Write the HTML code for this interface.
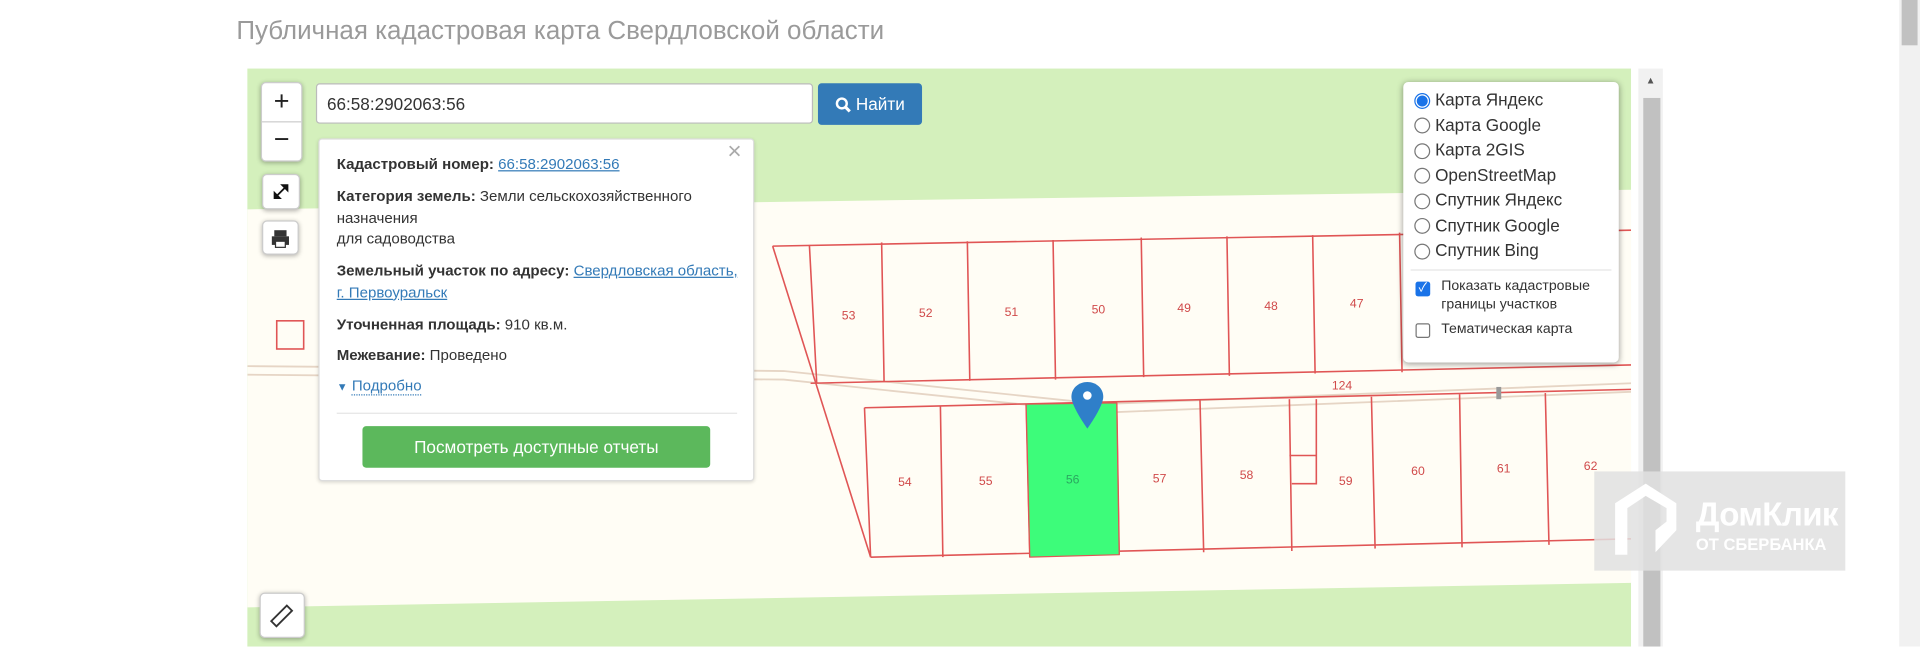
<!DOCTYPE html>
<html><head><meta charset="utf-8"><style>
html,body{margin:0;padding:0;background:#fff;overflow:hidden;width:1920px;height:646px}
#s{position:absolute;left:0;top:0;width:1568px;height:528px;transform:scale(1.22449);transform-origin:0 0;font-family:"Liberation Sans","Noto Sans CJK SC",sans-serif}
.a{position:absolute}
.btn{background:#fff;border:1px solid #ccc;border-radius:4px;box-shadow:0 1px 4px rgba(0,0,0,.3)}
.pp{font-size:12.3px;color:#333;line-height:17.5px}
.pp b{font-weight:bold}
.pp a{color:#337ab7;text-decoration:underline}
.ly{font-size:14px;color:#333}
.rd{position:absolute;left:9px;width:11px;height:11px;border:1px solid #777;border-radius:50%;background:#fff}
</style></head><body><div id="s">
<div class="a" style="left:193px;top:14px;font-size:21.2px;color:#9a9a9a">Публичная кадастровая карта Свердловской области</div>

<div class="a" style="left:202px;top:56px;width:1130px;height:472px;overflow:hidden;background:#d4f0bc">
<svg width="1130" height="472" viewBox="202 56 1130 472" style="position:absolute;left:0;top:0">
<polygon points="202,171 1332,155 1332,476 202,496" fill="#fffdf5"/>
<g fill="none" stroke="#e6d5c5" stroke-width="1.5">
<path d="M202,299 L640,303 L900,330 L1332,313"/><path d="M202,306 L640,310 L900,337 L1332,320"/>
</g>
<g fill="none" stroke="#e05555" stroke-width="1.3">
<path d="M631,201 L1332,188"/><path d="M662,313 L1332,298"/>
<path d="M631,201 L711,455"/>
<path d="M661,200 L667,313 M720,198 L722,312 M790,197 L792,311 M860,196 L862,310 M932,194 L934,308 M1002,193 L1004,307 M1072,192 L1074,305 M1143,190 L1145,304"/>
<path d="M706,333 L1332,318"/><path d="M711,455 L1332,440"/>
<path d="M706,333 L711,455 M768,332 L770,455 M838,330 L841,455 M912,329 L914,453 M980,327 L983,451 M1053,326 L1055,450 M1120,324 L1123,448 M1192,322 L1194,447 M1262,321 L1265,445"/>
<path d="M1053,372 L1075,372 L1075,395 L1055,395 M1075,372 L1075,326"/>
<rect x="226" y="262" width="22" height="23"/>
</g>
<polygon points="838,330 912,329 914,453 841,455" fill="#3dfc7a" stroke="#e05555" stroke-width="1"/>
<g fill="#d04a4a" font-size="10" font-family="Liberation Sans,sans-serif" text-anchor="middle">
<text x="693" y="261">53</text><text x="756" y="259">52</text><text x="826" y="258">51</text><text x="897" y="256">50</text><text x="967" y="255">49</text><text x="1038" y="253">48</text><text x="1108" y="251">47</text>
<text x="1096" y="318">124</text>
<text x="739" y="397">54</text><text x="805" y="396">55</text><text x="876" y="395" fill="#2aa860">56</text><text x="947" y="394">57</text><text x="1018" y="391">58</text><text x="1099" y="396">59</text><text x="1158" y="388">60</text><text x="1228" y="386">61</text><text x="1299" y="384">62</text>
</g>
<path d="M888,312 c-7,0 -13,5 -13,12 c0,8 13,26 13,26 c0,0 13,-18 13,-26 c0,-7 -6,-12 -13,-12z" fill="#2f7fc9"/>
<circle cx="888" cy="323" r="3.5" fill="#fff"/>
<rect x="1222" y="316" width="4" height="10" fill="#999"/>
</svg>
</div>

<!-- zoom -->
<div class="a btn" style="left:213px;top:67px;width:32px;height:63px;padding:0">
<div style="height:31px;border-bottom:1px solid #ccc;text-align:center;font-size:22px;line-height:30px;color:#222">+</div>
<div style="text-align:center;font-size:22px;line-height:28px;color:#222">−</div></div>
<div class="a btn" style="left:214px;top:142px;width:29px;height:27px">
<svg width="29" height="27" viewBox="0 0 29 27"><path d="M10,18 L19,9" stroke="#111" stroke-width="1.5"/><path d="M15,8 L20,8 L20,13Z M9,14 L9,19 L14,19Z" fill="#111" stroke="#111"/></svg></div>
<div class="a btn" style="left:214px;top:180px;width:28px;height:26px">
<svg width="28" height="26" viewBox="0 0 28 26"><rect x="9" y="7" width="10" height="5" fill="#333"/><rect x="7" y="12" width="14" height="7" fill="#333"/><rect x="10" y="16" width="8" height="5" fill="#fff" stroke="#333"/></svg></div>
<div class="a btn" style="left:212px;top:484px;width:35px;height:35px">
<svg width="35" height="35" viewBox="0 0 35 35"><rect x="14" y="9" width="6" height="18" transform="rotate(45 17 18)" fill="none" stroke="#333" stroke-width="1.5"/></svg></div>

<!-- search -->
<div class="a" style="left:258px;top:68px;width:406px;height:33px;border:1px solid #bbb;border-radius:3px;background:#fff;font-size:14px;line-height:33px;padding-left:8px;box-sizing:border-box;color:#333">66:58:2902063:56</div>
<div class="a" style="left:668px;top:68px;width:85px;height:34px;background:#337ab7;border-radius:3px;color:#fff;font-size:14px;line-height:34px;text-align:center">
<svg width="13" height="13" viewBox="0 0 13 13" style="vertical-align:-2px"><circle cx="5.5" cy="5.5" r="4" fill="none" stroke="#fff" stroke-width="2"/><path d="M8.5,8.5 L12,12" stroke="#fff" stroke-width="2.5"/></svg> Найти</div>

<!-- popup -->
<div class="a pp" style="left:260px;top:113px;width:356px;height:280px;background:#fff;border:1px solid #ddd;border-radius:3px;box-shadow:0 1px 3px rgba(0,0,0,.15);box-sizing:border-box">
<div class="a" style="left:333px;top:2px;font-size:20px;color:#aaa">×</div>
<div class="a" style="left:14px;top:12px"><b>Кадастровый номер:</b> <a>66:58:2902063:56</a></div>
<div class="a" style="left:14px;top:38px;width:330px"><b>Категория земель:</b> Земли сельскохозяйственного назначения<br>для садоводства</div>
<div class="a" style="left:14px;top:99px;width:335px"><b>Земельный участок по адресу:</b> <a>Свердловская область, г. Первоуральск</a></div>
<div class="a" style="left:14px;top:143px"><b>Уточненная площадь:</b> 910 кв.м.</div>
<div class="a" style="left:14px;top:168px"><b>Межевание:</b> Проведено</div>
<div class="a" style="left:14px;top:193px;color:#337ab7"><span style="font-size:9px">▼</span> <span style="border-bottom:1px dotted #337ab7">Подробно</span></div>
<div class="a" style="left:14px;top:223px;width:327px;border-top:1px solid #e5e5e5"></div>
<div class="a" style="left:35px;top:234px;width:284px;height:34px;background:#5cb85c;border-radius:3px;color:#fff;font-size:14px;line-height:34px;text-align:center">Посмотреть доступные отчеты</div>
</div>

<!-- layers -->
<div class="a ly" style="left:1146px;top:67px;width:176px;height:229px;background:#fff;border-radius:4px;box-shadow:0 1px 5px rgba(0,0,0,.4)">
<div class="rd" style="top:9px;border-color:#1a73e8;background:radial-gradient(#1a73e8 55%,#fff 60%)"></div><div class="a" style="left:26px;top:6px">Карта Яндекс</div>
<div class="rd" style="top:29px"></div><div class="a" style="left:26px;top:27px">Карта Google</div>
<div class="rd" style="top:50px"></div><div class="a" style="left:26px;top:47px">Карта 2GIS</div>
<div class="rd" style="top:70px"></div><div class="a" style="left:26px;top:68px">OpenStreetMap</div>
<div class="rd" style="top:91px"></div><div class="a" style="left:26px;top:88px">Спутник Яндекс</div>
<div class="rd" style="top:111px"></div><div class="a" style="left:26px;top:109px">Спутник Google</div>
<div class="rd" style="top:132px"></div><div class="a" style="left:26px;top:129px">Спутник Bing</div>
<div class="a" style="left:6px;top:153px;width:164px;border-top:1px solid #e5e5e5"></div>
<div class="a" style="left:10px;top:163px;width:12px;height:12px;background:#1a73e8;border-radius:2px;color:#fff;font-size:10px;line-height:12px;text-align:center">✓</div>
<div class="a" style="left:31px;top:160px;font-size:11.5px;line-height:15px">Показать кадастровые<br>границы участков</div>
<div class="a" style="left:10px;top:197px;width:10px;height:10px;border:1px solid #777;border-radius:2px"></div>
<div class="a" style="left:31px;top:196px;font-size:11.5px">Тематическая карта</div>
</div>

<!-- scrollbar -->
<div class="a" style="left:1338px;top:56px;width:20px;height:472px;background:#f1f1f1"></div>
<div class="a" style="left:1342px;top:80px;width:14px;height:448px;background:#c1c1c1"></div>
<div class="a" style="left:1344px;top:61px;font-size:8px;color:#555">▲</div>

<!-- watermark -->
<div class="a" style="left:1302px;top:385px;width:205px;height:81px;background:rgba(225,225,225,.85)">
<svg class="a" style="left:14px;top:8px" width="60" height="65" viewBox="0 0 60 65"><path d="M3,18 L28,2 L53,18 L53,40 L36,58 L36,40 L45,33 L45,22 L28,12 L13,22 L13,60 L3,60 Z" fill="#fff"/></svg>
<div class="a" style="left:83px;top:20px;color:#fff;font-size:27px;font-weight:bold;letter-spacing:-0.5px">ДомКлик</div>
<div class="a" style="left:83px;top:52px;color:#fff;font-size:13.5px;font-weight:bold">ОТ СБЕРБАНКА</div>
</div>

<div class="a" style="left:1551px;top:0;width:17px;height:528px;background:#f1f1f1"></div>
<div class="a" style="left:1553px;top:0;width:13px;height:37px;background:#c1c1c1"></div>
</div></body></html>
